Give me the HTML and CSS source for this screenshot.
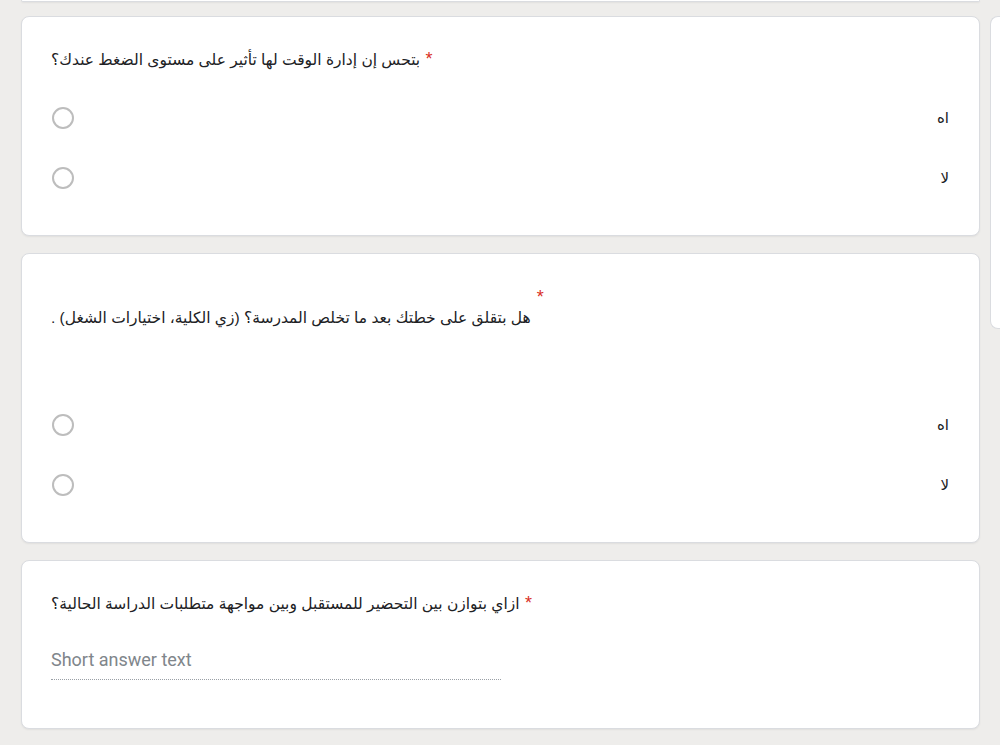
FILE: index.html
```html
<!DOCTYPE html>
<html lang="ar">
<head>
  <meta charset="UTF-8" />
  <title>استبيان</title>
  <link rel="stylesheet" href="styles.css">
</head>
<body>
  <div class="page">
    <div class="form-col">
      <div class="card tail"></div>

      <!-- سؤال 1 -->
      <div class="card q-one">
        <div class="q-title" dir="ltr">
          <span class="q-text">بتحس إن إدارة الوقت لها تأثير على مستوى الضغط عندك؟</span>
          <span class="req">*</span>
        </div>
        <div class="options">
          <div class="option"><span class="radio"></span><span class="opt-label">اه</span></div>
          <div class="option"><span class="radio"></span><span class="opt-label">لا</span></div>
        </div>
      </div>

      <!-- سؤال 2 -->
      <div class="card q-two">
        <div class="q-title split" dir="ltr">
          <span class="q-text" dir="rtl">هل بتقلق على خطتك بعد ما تخلص المدرسة؟ (زي الكلية، اختيارات الشغل) .</span>
          <span class="req">*</span>
        </div>
        <div class="options">
          <div class="option"><span class="radio"></span><span class="opt-label">اه</span></div>
          <div class="option"><span class="radio"></span><span class="opt-label">لا</span></div>
        </div>
      </div>

      <!-- سؤال 3 -->
      <div class="card q-three">
        <div class="q-title" dir="ltr">
          <span class="q-text">ازاي بتوازن بين التحضير للمستقبل وبين مواجهة متطلبات الدراسة الحالية؟</span>
          <span class="req">*</span>
        </div>
        <div class="short-answer">Short answer text</div>
      </div>
    </div>

    <div class="side-toolbar"></div>
  </div>
</body>
</html>
```

FILE: styles.css
```css
/* ---------- الأساسيات ---------- */
body {
  margin: 0;
  padding: 0;
  background: #eeedeb;
  font-family: Arial, "Liberation Sans", "DejaVu Sans", sans-serif;
  color: #202124;
  overflow: hidden;
}
.page {
  display: flex;
  align-items: flex-start;
  padding-left: 21px;
}
.form-col {
  width: 959px;
  flex-shrink: 0;
  display: flex;
  flex-direction: column;
}
.card {
  background: #fff;
  border: 1px solid #dadce0;
  border-radius: 8px;
  box-shadow: 0 1px 2px rgba(0, 0, 0, 0.06);
  padding: 31px 29px 27px 29px;
  margin-bottom: 17px;
}
.card.tail {
  padding: 0;
  height: 1px;
  border-top: none;
  border-radius: 0 0 8px 8px;
  margin-bottom: 14px;
}
/* ----- عنوان السؤال ----- */
.q-title {
  font-size: 15.5px;
  line-height: 24px;
  text-align: left;
}
.req {
  color: #d93025;
  font-size: 18px;
  line-height: 1;
  margin-left: 1px;
}
.q-title.split {
  display: flex;
  align-items: flex-start;
}
.q-title.split .q-text {
  padding-top: 21px;
}
.q-title.split .req {
  margin-left: 6px;
  padding-top: 3px;
}
/* ----- الاختيارات ----- */
.options {
  margin-top: 16px;
}
.q-two .options {
  margin-top: 65px;
}
.option {
  height: 60px;
  display: flex;
  align-items: center;
  justify-content: space-between;
}
.radio {
  width: 18px;
  height: 18px;
  border: 2px solid #bdbdbd;
  border-radius: 50%;
  margin-left: 1px;
}
.opt-label {
  font-size: 15px;
  padding-right: 1px;
}
/* ----- اجابة قصيرة ----- */
.q-three {
  padding-bottom: 48px;
}
.short-answer {
  margin-top: 32px;
  width: 450px;
  font-family: Roboto, Arial, sans-serif;
  font-size: 18px;
  line-height: 24px;
  color: #80868b;
  padding-bottom: 7px;
  border-bottom: 1px dotted #9aa0a6;
}
/* ----- شريط الأدوات الجانبي ----- */
.side-toolbar {
  margin-top: 16px;
  margin-left: 10px;
  width: 9px;
  height: 311px;
  flex-shrink: 0;
  background: #fff;
  border: 1px solid #dadce0;
  border-right: none;
  border-radius: 8px 0 0 8px;
}
```
